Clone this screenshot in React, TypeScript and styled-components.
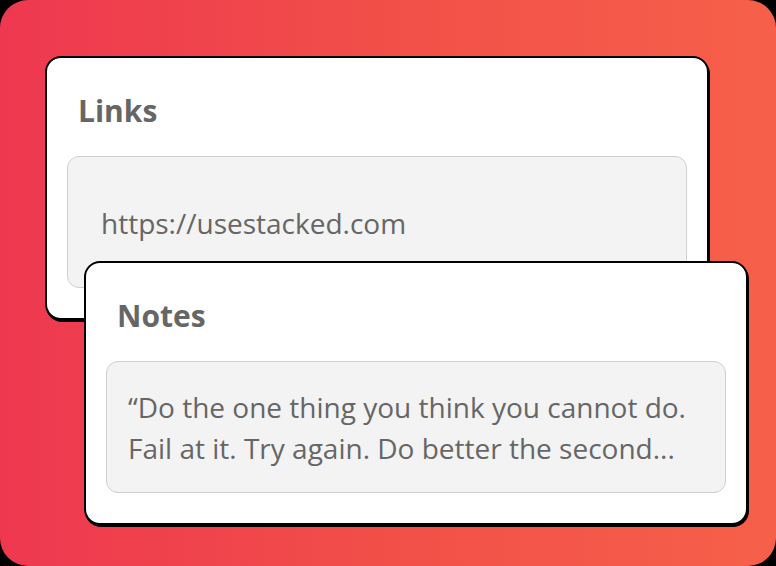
import styled, { createGlobalStyle } from "styled-components";

const GlobalStyle = createGlobalStyle`
  html, body {
    margin: 0;
    padding: 0;
    background: #000;
  }
  body {
    font-family: "Open Sans", "Noto Sans", sans-serif;
  }
`;

const Stage = styled.div`
  width: 776px;
  height: 566px;
  box-sizing: border-box;
  border-radius: 28px;
  overflow: hidden;
  background: linear-gradient(90deg, #ee3850 0%, #f25148 55%, #f6604a 100%);
  padding: 56px 0 0 45px;
`;

const Card = styled.div<{ $shift?: number }>`
  width: 664px;
  box-sizing: border-box;
  background: #fff;
  border: 2px solid #000;
  border-radius: 16px;
  box-shadow: 1px 2px 0 #000;
  padding: 33px 20px 30px 20px;
  position: relative;
  margin-left: ${(p) => p.$shift ?? 0}px;
  & + & {
    margin-top: -59px;
  }
`;

const Title = styled.h2`
  margin: 0 0 0 11px;
  font-size: 30px;
  line-height: 40px;
  font-weight: 700;
  color: #666;
`;

const Field = styled.div<{ $inset: number }>`
  margin-top: 25px;
  height: 132px;
  box-sizing: border-box;
  background: #f3f3f3;
  border: 1px solid #cfcfcf;
  border-radius: 12px;
  padding: 2px ${(p) => p.$inset}px 0;
  display: flex;
  align-items: center;
  font-size: 28px;
  line-height: 41px;
  color: #666;
`;

const Text = styled.div`
  white-space: nowrap;
  overflow: hidden;
`;

export default function App() {
  return (
    <>
      <GlobalStyle />
      <Stage>
        <Card>
          <Title>Links</Title>
          <Field $inset={33}>
            <Text>https://usestacked.com</Text>
          </Field>
        </Card>
        <Card $shift={39}>
          <Title>Notes</Title>
          <Field $inset={21}>
            <Text>
              “Do the one thing you think you cannot do.
              <br />
              Fail at it. Try again. Do better the second...
            </Text>
          </Field>
        </Card>
      </Stage>
    </>
  );
}
